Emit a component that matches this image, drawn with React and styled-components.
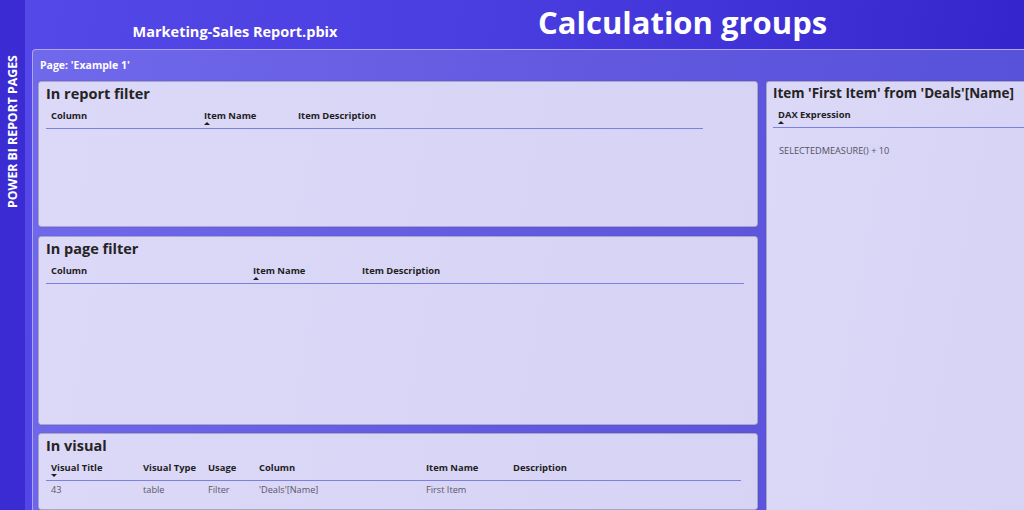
import React from "react";
import styled, { createGlobalStyle } from "styled-components";

const GlobalStyle = createGlobalStyle`
    html, body {
        margin: 0;
        padding: 0;
        background: #3a2dd0;
    }
    body {
        font-family: "Open Sans", "Noto Sans", "Liberation Sans", sans-serif;
    }
`;

const Page = styled.div`
    display: flex;
    width: 1024px;
    height: 510px;
    overflow: hidden;
`;

const Sidebar = styled.div`
    width: 25px;
    flex: none;
    background: #3a2cd2;
    display: flex;
    justify-content: center;
    padding-top: 55px;
    box-sizing: border-box;
`;

const SidebarLabel = styled.span`
    writing-mode: vertical-rl;
    transform: rotate(180deg);
    color: #ffffff;
    font-weight: 700;
    font-size: 12.3px;
    white-space: nowrap;
    height: 156px;
    text-align: right;
`;

const Main = styled.div`
    flex: 1;
    display: flex;
    flex-direction: column;
    background: linear-gradient(100deg, #5548e8 0%, #4a3de0 45%, #3022c8 100%);
    min-width: 0;
`;

const Header = styled.div`
    height: 49px;
    display: grid;
    grid-template-columns: 420px 1fr;
    flex: none;
`;

const FileName = styled.div`
    color: #ffffff;
    font-weight: 700;
    font-size: 14.5px;
    text-align: center;
    padding-top: 22px;
    line-height: 20px;
`;

const Title = styled.div`
    color: #ffffff;
    font-weight: 700;
    font-size: 31px;
    line-height: 44px;
    padding-left: 93px;
`;

const Panel = styled.div`
    flex: 1;
    margin-left: 7px;
    border-top: 1.5px solid #aea6f4;
    border-left: 1.5px solid #aea6f4;
    border-top-left-radius: 4px;
    background: linear-gradient(100deg, #7169ec 0%, #6259e0 50%, #5650d8 100%);
    padding: 0 0 0 5px;
    display: flex;
    flex-direction: column;
    min-height: 0;
`;

const PageLabel = styled.div`
    color: #ffffff;
    font-weight: 700;
    font-size: 10.5px;
    line-height: 14px;
    padding: 8px 0 9px 2px;
`;

const Body = styled.div`
    flex: 1;
    display: grid;
    grid-template-columns: 720px 1fr;
    column-gap: 8px;
    min-height: 0;
`;

const LeftColumn = styled.div`
    display: grid;
    grid-template-rows: 146px 189px 1fr;
    row-gap: 8.5px;
    min-height: 0;
`;

const Card = styled.div`
    background: linear-gradient(100deg, #dbd8f8 0%, #d6d3f4 100%);
    border: 1px solid #a9a7c6;
    border-radius: 3px;
    box-shadow: 0 0 1px rgba(40, 30, 120, 0.4);
    padding: ${p => p.$pad || "2px 0 0 7px"};
    box-sizing: border-box;
    overflow: hidden;
    ${p => p.$open && "border-bottom: none; border-right: none; border-radius: 3px 0 0 0;"}
`;

const CardTitle = styled.div`
    color: #252423;
    font-weight: 700;
    font-size: ${p => p.$size || "14.5px"};
    line-height: 20px;
`;

const Table = styled.div`
    width: ${p => p.$width}px;
    margin-top: ${p => p.$top || "4px"};
`;

const Row = styled.div`
    display: grid;
    grid-template-columns: ${p => p.$cols};
`;

const HeadCell = styled.div`
    position: relative;
    color: #1e1e1e;
    font-weight: 700;
    font-size: 9.4px;
    line-height: 13px;
    padding: 1px 5px 6px;
    border-bottom: 1.5px solid #7c80e0;
    white-space: nowrap;
`;

const SortArrow = styled.span`
    position: absolute;
    left: 5px;
    top: 14px;
    width: 0;
    height: 0;
    border-left: 3px solid transparent;
    border-right: 3px solid transparent;
    ${p => p.$down
        ? "border-top: 3.5px solid #1e1e1e;"
        : "border-bottom: 3.5px solid #1e1e1e;"}
`;

const Cell = styled.div`
    color: #5a5866;
    font-size: 9.2px;
    line-height: 13px;
    padding: 2px 5px;
    white-space: nowrap;
`;

const Expression = styled.div`
    color: #55535f;
    font-size: 9.2px;
    line-height: 13px;
    padding: 16px 0 0 6px;
`;

const FilterTable = ({ width, cols, headers, sortIndex, sortDown, rows = [] }) => (
    <Table $width={width}>
        <Row $cols={cols}>
            {headers.map((h, i) => (
                <HeadCell key={h}>
                    {h}
                    {i === sortIndex && <SortArrow $down={sortDown} />}
                </HeadCell>
            ))}
        </Row>
        {rows.map((r, ri) => (
            <Row $cols={cols} key={ri}>
                {r.map((c, ci) => <Cell key={ci}>{c}</Cell>)}
            </Row>
        ))}
    </Table>
);

export default function App() {
    return (
        <Page>
            <GlobalStyle />
            <Sidebar>
                <SidebarLabel>POWER BI REPORT PAGES</SidebarLabel>
            </Sidebar>
            <Main>
                <Header>
                    <FileName>Marketing-Sales Report.pbix</FileName>
                    <Title>Calculation groups</Title>
                </Header>
                <Panel>
                    <PageLabel>Page: 'Example 1'</PageLabel>
                    <Body>
                        <LeftColumn>
                            <Card>
                                <CardTitle>In report filter</CardTitle>
                                <FilterTable
                                    width={657}
                                    cols="153px 94px 1fr"
                                    headers={["Column", "Item Name", "Item Description"]}
                                    sortIndex={1}
                                />
                            </Card>
                            <Card>
                                <CardTitle>In page filter</CardTitle>
                                <FilterTable
                                    width={698}
                                    cols="202px 109px 1fr"
                                    headers={["Column", "Item Name", "Item Description"]}
                                    sortIndex={1}
                                />
                            </Card>
                            <Card>
                                <CardTitle>In visual</CardTitle>
                                <FilterTable
                                    width={695}
                                    cols="92px 65px 51px 167px 87px 1fr"
                                    headers={["Visual Title", "Visual Type", "Usage", "Column", "Item Name", "Description"]}
                                    sortIndex={0}
                                    sortDown
                                    rows={[["43", "table", "Filter", "'Deals'[Name]", "First Item", ""]]}
                                />
                            </Card>
                        </LeftColumn>
                        <Card $open $pad="1px 0 0 6px">
                            <CardTitle $size="13.5px">Item 'First Item' from 'Deals'[Name]</CardTitle>
                            <Table $width={260} $top="4px">
                                <Row $cols="1fr">
                                    <HeadCell>
                                        DAX Expression
                                        <SortArrow />
                                    </HeadCell>
                                </Row>
                            </Table>
                            <Expression>SELECTEDMEASURE() + 10</Expression>
                        </Card>
                    </Body>
                </Panel>
            </Main>
        </Page>
    );
}
